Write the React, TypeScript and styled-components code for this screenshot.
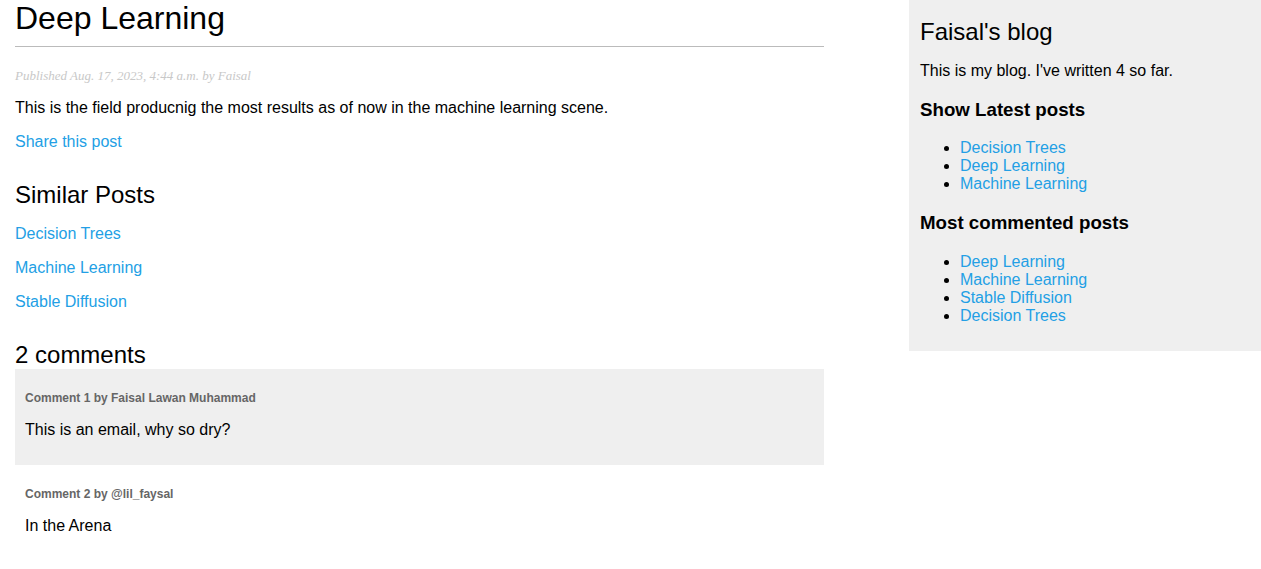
import React from 'react';
import styled, { createGlobalStyle } from 'styled-components';

// Post data
interface Comment {
    id: number;
    author: string;
    body: string;
}

const similarPosts = ['Decision Trees', 'Machine Learning', 'Stable Diffusion'];
const latestPosts = ['Decision Trees', 'Deep Learning', 'Machine Learning'];
const mostCommented = ['Deep Learning', 'Machine Learning', 'Stable Diffusion', 'Decision Trees'];

const comments: Comment[] = [
    { id: 1, author: 'Faisal Lawan Muhammad', body: 'This is an email, why so dry?' },
    { id: 2, author: '@lil_faysal', body: 'In the Arena' },
];

const GlobalStyle = createGlobalStyle`
  body {
    margin: 0;
    padding: 0;
    font-family: "Liberation Sans", Arial, Helvetica, sans-serif;
    font-size: 16px;
    color: #000;
    background: #fff;
  }
  a {
    color: #239fe5;
    text-decoration: none;
  }
`;

// Layout
const Page = styled.div`
  display: flex;
  justify-content: space-between;
  align-items: flex-start;
`;

const Content = styled.div`
  width: 809px;
  margin-left: 15px;
`;

const Sidebar = styled.aside`
  width: 331px;
  padding: 10px 10px 10px 11px;
  background: #efefef;
`;

// Headings
const Title = styled.h1`
  font-size: 32px;
  font-weight: normal;
  line-height: 36px;
  margin: 0 0 21px;
  padding: 0 0 10px;
  border-bottom: 1px solid #bbb;
`;

const SectionTitle = styled.h2<{ $flush?: boolean }>`
  font-size: 24px;
  font-weight: normal;
  margin: ${({ $flush }) => ($flush ? '8px 0 0' : '30px 0 0')};
`;

const SubTitle = styled.h3`
  font-size: 18.72px;
  font-weight: bold;
  margin: 18.72px 0;
`;

// Text
const DateLine = styled.p`
  color: #c8c8c8;
  font-family: "Liberation Serif", Georgia, serif;
  font-size: 13px;
  line-height: 15px;
  font-style: italic;
  margin: 12px 0;
`;

const Paragraph = styled.p`
  margin: 16px 0;
`;

const PostList = styled.ul`
  margin: 16px 0;
  padding-left: 40px;
`;

// Comments
const CommentBox = styled.div<{ $shaded: boolean }>`
  padding: 10px;
  background: ${({ $shaded }) => ($shaded ? '#efefef' : 'transparent')};
`;

const CommentInfo = styled.p`
  font-weight: bold;
  font-size: 12px;
  color: #666;
  margin: 12px 0;
`;

const App: React.FC = () => {
    return (
        <>
            <GlobalStyle />
            <Page>
                <Content>
                    <Title>Deep Learning</Title>
                    <DateLine>Published Aug. 17, 2023, 4:44 a.m. by Faisal</DateLine>
                    <Paragraph>This is the field producnig the most results as of now in the machine learning scene.</Paragraph>
                    <Paragraph>
                        <a href="#">Share this post</a>
                    </Paragraph>

                    <SectionTitle>Similar Posts</SectionTitle>
                    {similarPosts.map(title => (
                        <Paragraph key={title}>
                            <a href="#">{title}</a>
                        </Paragraph>
                    ))}

                    <SectionTitle>{comments.length} comments</SectionTitle>
                    {comments.map((comment, index) => (
                        <CommentBox key={comment.id} $shaded={index % 2 === 0}>
                            <CommentInfo>Comment {index + 1} by {comment.author}</CommentInfo>
                            <Paragraph>{comment.body}</Paragraph>
                        </CommentBox>
                    ))}
                </Content>

                <Sidebar>
                    <SectionTitle $flush>Faisal's blog</SectionTitle>
                    <Paragraph>This is my blog. I've written 4 so far.</Paragraph>
                    <SubTitle>Show Latest posts</SubTitle>
                    <PostList>
                        {latestPosts.map(title => (
                            <li key={title}><a href="#">{title}</a></li>
                        ))}
                    </PostList>
                    <SubTitle>Most commented posts</SubTitle>
                    <PostList>
                        {mostCommented.map(title => (
                            <li key={title}><a href="#">{title}</a></li>
                        ))}
                    </PostList>
                </Sidebar>
            </Page>
        </>
    );
};

export default App;
